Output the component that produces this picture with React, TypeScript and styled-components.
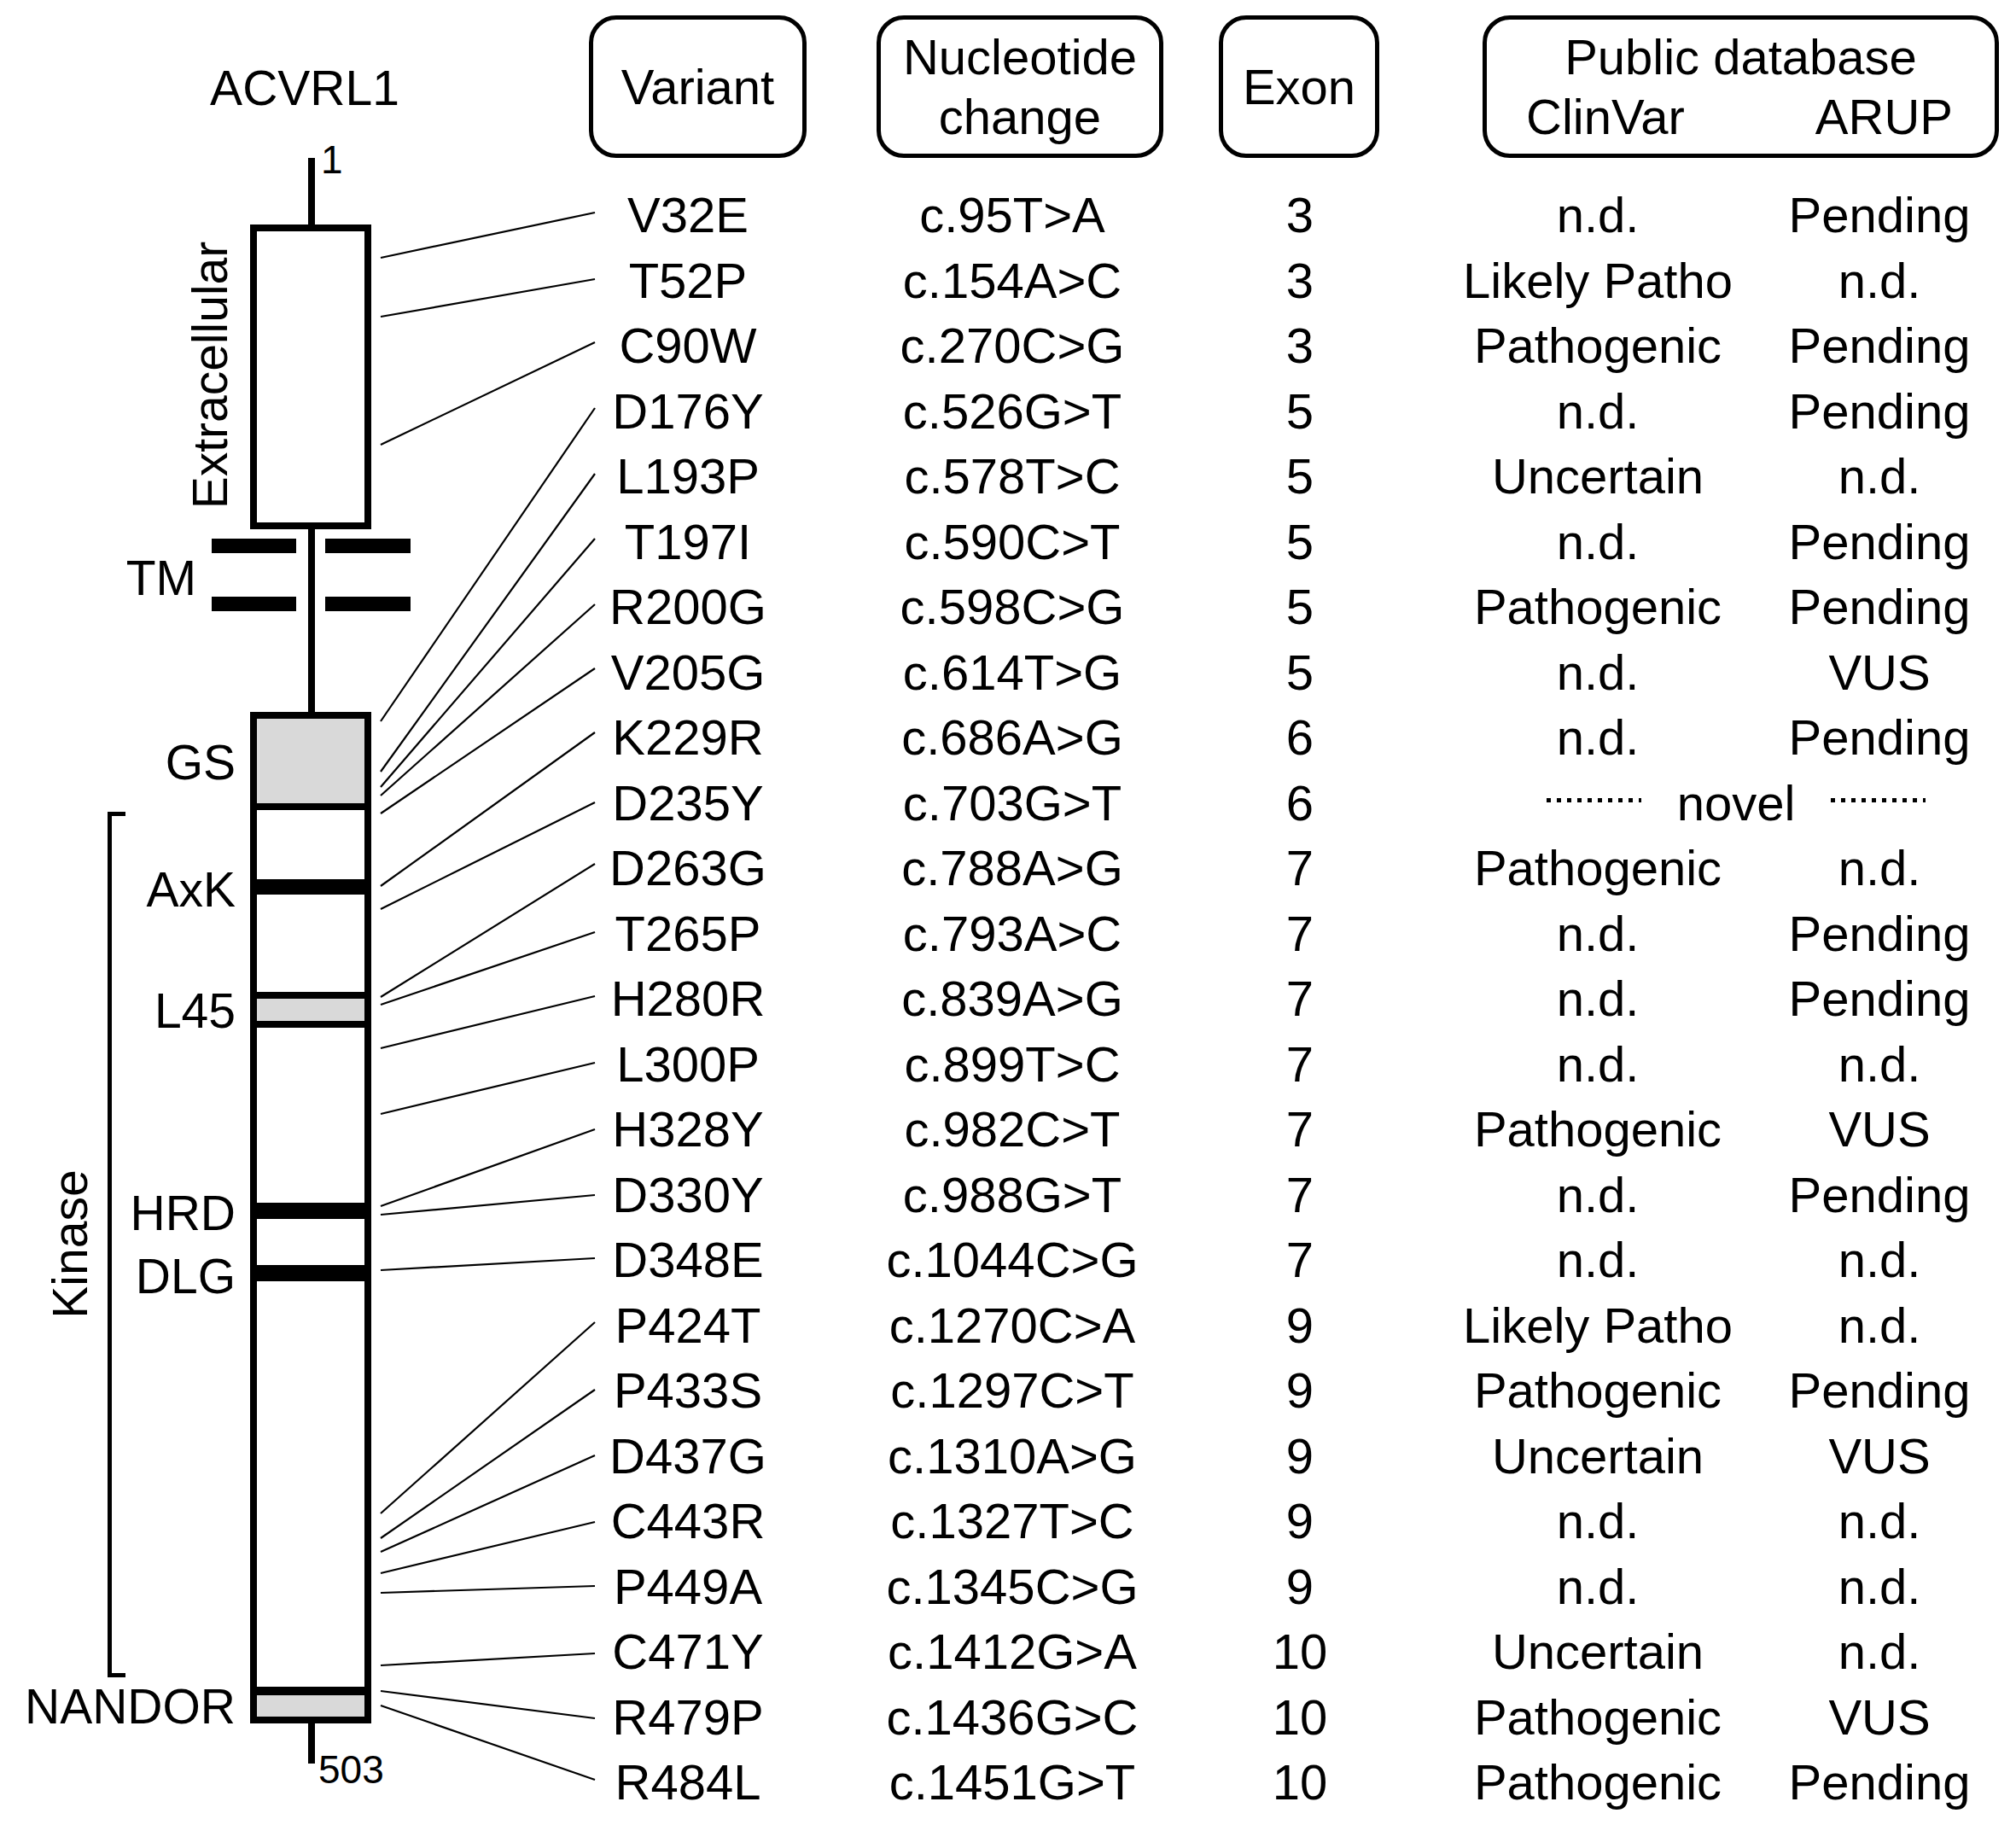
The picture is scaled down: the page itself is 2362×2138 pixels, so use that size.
import React from 'react';
import styled, { createGlobalStyle } from 'styled-components';

// base
const GlobalStyle = createGlobalStyle`
  html, body {
    margin: 0;
    padding: 0;
    background: #fff;
  }
  body {
    font-family: "Liberation Sans", Arial, sans-serif;
    color: #000;
  }
`;

// layout
const Page = styled.div`
  display: flex;
  width: 2362px;
  height: 2138px;
  background: #fff;
  overflow: hidden;
`;

const Diagram = styled.svg`
  flex: 0 0 690px;
  width: 690px;
  height: 2138px;
  display: block;
  overflow: visible;
  font-family: "Liberation Sans", Arial, sans-serif;
`;

const Table = styled.div`
  flex: 1;
  display: flex;
  flex-direction: column;
  padding-top: 18px;
`;

const HeaderRow = styled.div`
  display: flex;
  height: 167px;
`;

const HeaderBox = styled.div<{ $width: number; $offset: number }>`
  box-sizing: border-box;
  width: ${(p) => p.$width}px;
  margin-left: ${(p) => p.$offset}px;
  height: 100%;
  border: 5px solid #000;
  border-radius: 32px;
  display: flex;
  flex-direction: column;
  align-items: center;
  justify-content: center;
  font-size: 58px;
  line-height: 70px;
  white-space: nowrap;
`;

const SubHeads = styled.div`
  align-self: stretch;
  display: flex;
  justify-content: space-between;
  padding: 0 49px 0 46px;
`;

const Body = styled.div`
  margin-top: 29.4px;
  display: grid;
  grid-template-columns: 232px 528px 146px 552px 108px;
  grid-auto-rows: 76.5px;
`;

const Cell = styled.div`
  display: flex;
  justify-content: center;
  font-size: 58px;
  line-height: 76.5px;
  white-space: nowrap;
`;

const NovelCell = styled.div`
  grid-column: 4 / span 2;
  display: flex;
  align-items: center;
  gap: 42px;
  padding-left: 216px;
  font-size: 58px;
  line-height: 76.5px;
  white-space: nowrap;
`;

const Dots = styled.span`
  width: 113px;
  height: 5px;
  margin-bottom: 7px;
  background: repeating-linear-gradient(to right, #000 0 5px, transparent 5px 12px);
`;

// data
type Row = {
  variant: string;
  change: string;
  exon: string;
  clinvar?: string;
  arup?: string;
  from: number;
  to: number;
};

const rows: Row[] = [
  { variant: 'V32E', change: 'c.95T>A', exon: '3', clinvar: 'n.d.', arup: 'Pending', from: 302, to: 249 },
  { variant: 'T52P', change: 'c.154A>C', exon: '3', clinvar: 'Likely Patho', arup: 'n.d.', from: 371, to: 327 },
  { variant: 'C90W', change: 'c.270C>G', exon: '3', clinvar: 'Pathogenic', arup: 'Pending', from: 521, to: 401 },
  { variant: 'D176Y', change: 'c.526G>T', exon: '5', clinvar: 'n.d.', arup: 'Pending', from: 845, to: 478 },
  { variant: 'L193P', change: 'c.578T>C', exon: '5', clinvar: 'Uncertain', arup: 'n.d.', from: 904, to: 555 },
  { variant: 'T197I', change: 'c.590C>T', exon: '5', clinvar: 'n.d.', arup: 'Pending', from: 922, to: 631 },
  { variant: 'R200G', change: 'c.598C>G', exon: '5', clinvar: 'Pathogenic', arup: 'Pending', from: 932, to: 708 },
  { variant: 'V205G', change: 'c.614T>G', exon: '5', clinvar: 'n.d.', arup: 'VUS', from: 953, to: 783 },
  { variant: 'K229R', change: 'c.686A>G', exon: '6', clinvar: 'n.d.', arup: 'Pending', from: 1038, to: 858 },
  { variant: 'D235Y', change: 'c.703G>T', exon: '6', from: 1065, to: 940 },
  { variant: 'D263G', change: 'c.788A>G', exon: '7', clinvar: 'Pathogenic', arup: 'n.d.', from: 1168, to: 1012 },
  { variant: 'T265P', change: 'c.793A>C', exon: '7', clinvar: 'n.d.', arup: 'Pending', from: 1177, to: 1092 },
  { variant: 'H280R', change: 'c.839A>G', exon: '7', clinvar: 'n.d.', arup: 'Pending', from: 1228, to: 1167 },
  { variant: 'L300P', change: 'c.899T>C', exon: '7', clinvar: 'n.d.', arup: 'n.d.', from: 1305, to: 1245 },
  { variant: 'H328Y', change: 'c.982C>T', exon: '7', clinvar: 'Pathogenic', arup: 'VUS', from: 1413, to: 1323 },
  { variant: 'D330Y', change: 'c.988G>T', exon: '7', clinvar: 'n.d.', arup: 'Pending', from: 1423, to: 1400 },
  { variant: 'D348E', change: 'c.1044C>G', exon: '7', clinvar: 'n.d.', arup: 'n.d.', from: 1488, to: 1474 },
  { variant: 'P424T', change: 'c.1270C>A', exon: '9', clinvar: 'Likely Patho', arup: 'n.d.', from: 1773, to: 1549 },
  { variant: 'P433S', change: 'c.1297C>T', exon: '9', clinvar: 'Pathogenic', arup: 'Pending', from: 1802, to: 1628 },
  { variant: 'D437G', change: 'c.1310A>G', exon: '9', clinvar: 'Uncertain', arup: 'VUS', from: 1818, to: 1705 },
  { variant: 'C443R', change: 'c.1327T>C', exon: '9', clinvar: 'n.d.', arup: 'n.d.', from: 1843, to: 1783 },
  { variant: 'P449A', change: 'c.1345C>G', exon: '9', clinvar: 'n.d.', arup: 'n.d.', from: 1866, to: 1858 },
  { variant: 'C471Y', change: 'c.1412G>A', exon: '10', clinvar: 'Uncertain', arup: 'n.d.', from: 1951, to: 1937 },
  { variant: 'R479P', change: 'c.1436G>C', exon: '10', clinvar: 'Pathogenic', arup: 'VUS', from: 1981, to: 2013 },
  { variant: 'R484L', change: 'c.1451G>T', exon: '10', clinvar: 'Pathogenic', arup: 'Pending', from: 1998, to: 2085 },
];

const GREY = '#d9d9d9';

const domainLabels = [
  { text: 'GS', y: 913 },
  { text: 'AxK', y: 1062 },
  { text: 'L45', y: 1204 },
  { text: 'HRD', y: 1441 },
  { text: 'DLG', y: 1515 },
  { text: 'NANDOR', y: 2019 },
];

const Protein: React.FC = () => (
  <Diagram viewBox="0 0 690 2138">
    <text x={357} y={123} fontSize={57} textAnchor="middle">ACVRL1</text>
    <text x={376} y={203} fontSize={46}>1</text>
    <text x={373} y={2089} fontSize={46}>503</text>

    {/* backbone */}
    <rect x={361} y={185} width={8} height={80} />
    <rect x={361} y={618} width={8} height={218} />
    <rect x={361} y={2017} width={8} height={49} />

    {/* extracellular */}
    <rect x={297} y={267} width={134} height={349} fill="#fff" stroke="#000" strokeWidth={8} />
    <text x={266} y={439.5} fontSize={57} textAnchor="middle" transform="rotate(-90 266 439.5)">
      Extracellular
    </text>

    {/* membrane */}
    <rect x={248} y={631} width={99} height={17} />
    <rect x={381} y={631} width={100} height={17} />
    <rect x={248} y={699} width={99} height={17} />
    <rect x={381} y={699} width={100} height={17} />
    <text x={230} y={697} fontSize={57} textAnchor="end">TM</text>

    {/* kinase region */}
    <rect x={297} y={838} width={134} height={1177} fill="#fff" />
    <rect x={297} y={838} width={134} height={103} fill={GREY} />
    <rect x={293} y={941} width={142} height={8} />
    <rect x={293} y={1030} width={142} height={18} />
    <rect x={293} y={1162} width={142} height={42} />
    <rect x={301} y={1170} width={126} height={26} fill={GREY} />
    <rect x={293} y={1409} width={142} height={19} />
    <rect x={293} y={1482} width={142} height={19} />
    <rect x={293} y={1976} width={142} height={10} />
    <rect x={297} y={1986} width={134} height={29} fill={GREY} />
    <rect x={297} y={838} width={134} height={1177} fill="none" stroke="#000" strokeWidth={8} />

    {domainLabels.map((d) => (
      <text key={d.text} x={276} y={d.y} fontSize={57} textAnchor="end">{d.text}</text>
    ))}

    <path d="M147 953.5 H128.5 V1962.5 H147" fill="none" stroke="#000" strokeWidth={5} />
    <text x={102} y={1457.5} fontSize={57} textAnchor="middle" transform="rotate(-90 102 1457.5)">
      Kinase
    </text>

    {/* variant connectors */}
    {rows.map((r) => (
      <line key={r.variant} x1={446} y1={r.from} x2={697} y2={r.to} stroke="#000" strokeWidth={2.2} />
    ))}
  </Diagram>
);

const App: React.FC = () => (
  <>
    <GlobalStyle />
    <Page>
      <Protein />
      <Table>
        <HeaderRow>
          <HeaderBox $width={255} $offset={0}>Variant</HeaderBox>
          <HeaderBox $width={336} $offset={82}>
            <span>Nucleotide</span>
            <span>change</span>
          </HeaderBox>
          <HeaderBox $width={188} $offset={65}>Exon</HeaderBox>
          <HeaderBox $width={605} $offset={121}>
            <span>Public database</span>
            <SubHeads>
              <span>ClinVar</span>
              <span>ARUP</span>
            </SubHeads>
          </HeaderBox>
        </HeaderRow>
        <Body>
          {rows.map((r) => (
            <React.Fragment key={r.variant}>
              <Cell>{r.variant}</Cell>
              <Cell>{r.change}</Cell>
              <Cell>{r.exon}</Cell>
              {r.clinvar ? (
                <>
                  <Cell>{r.clinvar}</Cell>
                  <Cell>{r.arup}</Cell>
                </>
              ) : (
                <NovelCell>
                  <Dots />
                  <span>novel</span>
                  <Dots />
                </NovelCell>
              )}
            </React.Fragment>
          ))}
        </Body>
      </Table>
    </Page>
  </>
);

export default App;
